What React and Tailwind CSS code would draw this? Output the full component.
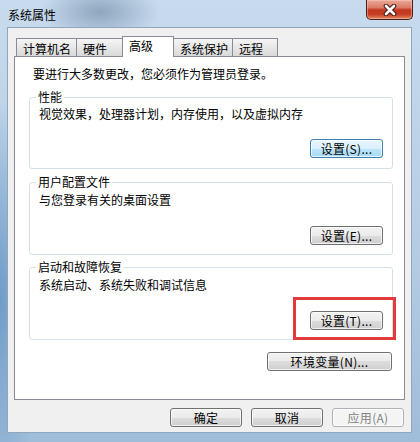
import React from 'react';

const font = "font-['Noto_Sans_CJK_SC',sans-serif]";

const tabs = [
  { label: '计算机名', w: 'w-[61px]' },
  { label: '硬件', w: 'w-[47px]' },
  { label: '高级', w: 'w-[52px]', active: true },
  { label: '系统保护', w: 'w-[60px]' },
  { label: '远程', w: 'w-[46px]' },
];

const groups = [
  {
    title: '性能',
    desc: '视觉效果，处理器计划，内存使用，以及虚拟内存',
    btn: '设置(S)...',
    hot: true,
    gap: 'mt-[9px]',
    pt: 'pt-[3px]',
    pb: 'pb-[10px]',
  },
  {
    title: '用户配置文件',
    desc: '与您登录有关的桌面设置',
    btn: '设置(E)...',
    gap: 'mt-[6px]',
    pt: 'pt-[4px]',
    pb: 'pb-[9px]',
  },
  {
    title: '启动和故障恢复',
    desc: '系统启动、系统失败和调试信息',
    btn: '设置(T)...',
    marked: true,
    gap: 'mt-[5px]',
    pt: 'pt-[4px]',
    pb: 'pb-[9px]',
  },
];

const WinButton = ({ children, w = 'w-[73px]', hot, disabled }) => {
  let look =
    'border-[#707070] bg-[linear-gradient(#f2f2f2_0%,#ebebeb_50%,#dddddd_50%,#cfcfcf_100%)] text-black';
  if (hot)
    look =
      'border-[#3c7fb1] bg-[linear-gradient(#eaf6fd_0%,#d9f0fc_50%,#bee6fd_50%,#a7d9f5_100%)] text-black';
  if (disabled) look = 'border-[#adb2b5] bg-[#f4f4f4] text-[#838383]';
  return (
    <div
      className={`${w} h-[19px] flex items-center justify-center rounded-[3px] border ${look} shadow-[inset_0_0_0_1px_rgba(255,255,255,0.7)] text-[12px] leading-[14px] tracking-[0.3px]`}
    >
      {children}
    </div>
  );
};

const CloseIcon = () => (
  <svg width="16" height="12" viewBox="0 0 16 12">
    <path d="M4 2 L12 10 M12 2 L4 10" stroke="#4a1a12" strokeWidth="4.6" strokeLinecap="round" />
    <path d="M4 2 L12 10 M12 2 L4 10" stroke="#ffffff" strokeWidth="2.6" strokeLinecap="round" />
  </svg>
);

const GroupBox = ({ g }) => (
  <fieldset className={`ml-[14px] w-[364px] ${g.gap} ${g.pb} border border-[#d5dfe5] rounded-[3px]`}>
    <legend className="ml-[6px] px-[2px] text-[12px] leading-[14px]">{g.title}</legend>
    <div className={`${g.pt} pl-[9px] text-[12px] leading-[14px]`}>{g.desc}</div>
    <div className={`flex justify-end pr-[9px] ${g.marked ? 'mt-[19px]' : g.hot ? 'mt-[18px]' : 'mt-[19px]'}`}>
      <div className="relative">
        <WinButton hot={g.hot}>{g.btn}</WinButton>
        {g.marked && (
          <span className="absolute -left-[17px] -top-[14px] -right-[13px] -bottom-[10px] border-[3px] border-[#e23b3f] pointer-events-none" />
        )}
      </div>
    </div>
  </fieldset>
);

export default function App() {
  return (
    <div
      className={`${font} w-[420px] h-[442px] flex flex-col text-black bg-[radial-gradient(ellipse_60px_30px_at_100px_12px,#8ea6bf_0%,transparent_100%),radial-gradient(ellipse_40px_200px_at_0px_300px,#6f9cc8_0%,transparent_100%),linear-gradient(#c8dbee,#b3cbe3_60%,#9fbcd9)]`}
    >
      {/* title bar */}
      <div className="h-[27px] flex justify-between">
        <div className="pl-[8px] pt-[7px] text-[12px] leading-[16px] text-black">系统属性</div>
        <div className="mr-[7px] w-[47px] h-[20px] rounded-b-[5px] border border-t-0 border-[#4b1d17] bg-[linear-gradient(#eaa898_0%,#dc7b65_40%,#c3391f_52%,#c53d24_75%,#e08a5e_100%)] shadow-[inset_0_0_0_1px_rgba(255,210,200,0.45)] flex items-center justify-center">
          <CloseIcon />
        </div>
      </div>

      {/* client area */}
      <div className="ml-[7px] w-[405px] h-[406px] bg-[#f0f0f0] border border-[#8fa6bf] flex flex-col">
        {/* tab strip */}
        <div className="h-[28px] flex items-end pl-[8px]">
          {tabs.map((t, i) =>
            t.active ? (
              <div
                key={t.label}
                className={`${t.w} h-[21px] -ml-px -mb-px relative z-10 bg-white border border-b-0 border-[#898c95] pl-[6px] pt-[2px] text-[12px] leading-[14px]`}
              >
                {t.label}
              </div>
            ) : (
              <div
                key={t.label}
                className={`${t.w} h-[18px] ${i > 0 ? '-ml-px' : ''} bg-linear-to-b from-[#f5f5f5] to-[#d9d9d9] border border-b-0 border-[#898c95] pl-[6px] pt-[3px] text-[12px] leading-[14px]`}
              >
                {t.label}
              </div>
            )
          )}
        </div>

        {/* tab page */}
        <div className="ml-[6px] w-[391px] h-[344px] bg-white border border-[#898c95] flex flex-col">
          <div className="pt-[10px] pl-[18px] text-[12px] leading-[14px]">
            要进行大多数更改，您必须作为管理员登录。
          </div>
          {groups.map(g => (
            <GroupBox key={g.title} g={g} />
          ))}
          <div className="mt-[12px] flex justify-end pr-[12px]">
            <WinButton w="w-[125px]">环境变量(N)...</WinButton>
          </div>
        </div>

        {/* dialog buttons */}
        <div className="mt-[8px] flex justify-end gap-[9px] pr-[7px]">
          <WinButton w="w-[72px]">确定</WinButton>
          <WinButton w="w-[72px]">取消</WinButton>
          <WinButton w="w-[72px]" disabled>应用(A)</WinButton>
        </div>
      </div>
    </div>
  );
}
